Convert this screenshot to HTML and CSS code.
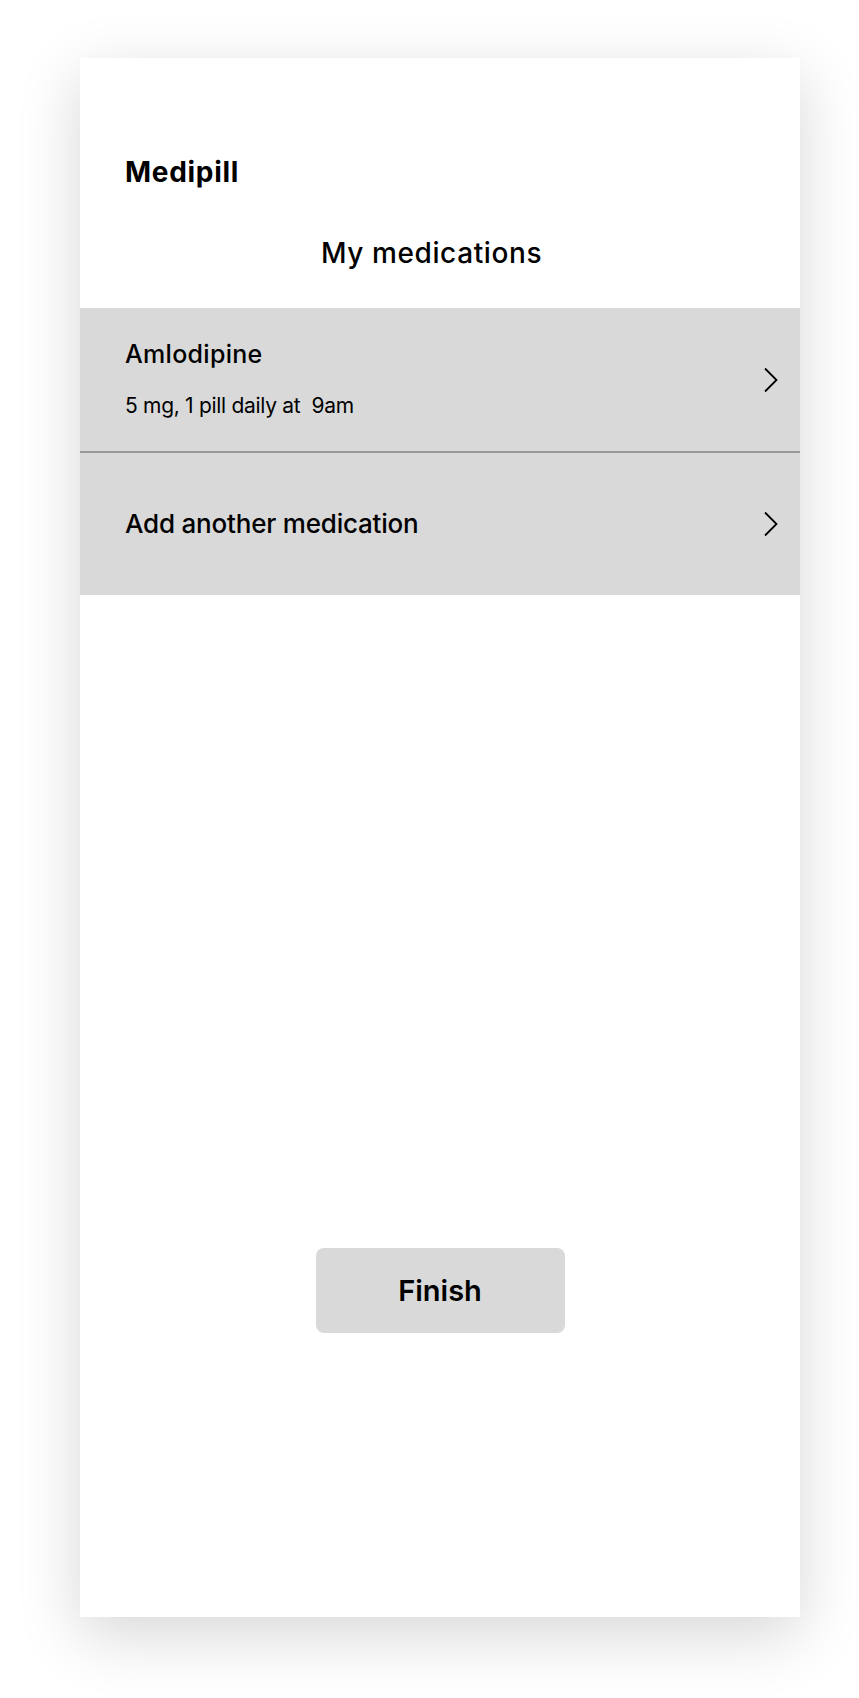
FILE: index.html
```html
<!DOCTYPE html>
<html>
<head>
	<meta charset="utf-8">
	<title>Medipill</title>
	<link rel="stylesheet" href="styles.css">
</head>
<body>
	<div class="page">
		<div class="phone">
			<div class="brand">Medipill</div>
			<h1 class="title">My medications</h1>

			<ul class="med-list">
				<li class="med-item first">
					<div class="med-text">
						<div class="med-name">Amlodipine</div>
						<div class="med-dose">5 mg, 1 pill daily at&nbsp; 9am</div>
					</div>
					<svg class="chevron" width="16" height="26" viewBox="0 0 16 26">
						<path d="M2 1.5 L13.5 13 L2 24.5" fill="none" stroke="#000" stroke-width="1.8"/>
					</svg>
				</li>
				<li class="med-item add">
					<div class="med-add">Add another medication</div>
					<svg class="chevron" width="16" height="26" viewBox="0 0 16 26">
						<path d="M2 1.5 L13.5 13 L2 24.5" fill="none" stroke="#000" stroke-width="1.8"/>
					</svg>
				</li>
			</ul>

			<div class="footer">
				<button class="finish">Finish</button>
			</div>
		</div>
	</div>
</body>
</html>
```

FILE: styles.css
```css
* {
	padding: 0;
	margin: 0;
	box-sizing: border-box;
}
li {
	list-style: none;
}
body {
	background: #fff;
	font-family: Inter, "Liberation Sans", sans-serif;
	color: #000;
}
.page {
	padding: 58px 59px 81px 80px;
}
.phone {
	width: 720px;
	height: 1559px;
	background: #fff;
	box-shadow: 0 18px 60px rgba(0, 0, 0, 0.16);
	display: flex;
	flex-direction: column;
}
.brand {
	padding: 96px 0 0 45px;
	font-size: 28px;
	font-weight: 700;
	line-height: 36px;
	letter-spacing: 0.7px;
}
.title {
	margin-top: 46px;
	padding-right: 17px;
	text-align: center;
	font-size: 28px;
	font-weight: 500;
	line-height: 34px;
	letter-spacing: 0.6px;
}
.med-list {
	margin-top: 38px;
	background: #d9d9d9;
}
.med-item {
	display: flex;
	align-items: center;
	justify-content: space-between;
	padding: 0 21px 0 45px;
}
.med-item.first {
	height: 145px;
	border-bottom: 2px solid #9a9a9a;
}
.med-item.add {
	height: 142px;
}
.med-name {
	font-size: 25px;
	font-weight: 500;
	line-height: 30px;
	letter-spacing: 0.3px;
}
.med-dose {
	margin-top: 23px;
	font-size: 21px;
	font-weight: 400;
	line-height: 28px;
	letter-spacing: -0.3px;
}
.med-add {
	font-size: 26px;
	font-weight: 500;
	line-height: 32px;
	letter-spacing: -0.2px;
}
.chevron {
	display: block;
}
.footer {
	margin-top: 653px;
	display: flex;
	justify-content: center;
}
.finish {
	width: 249px;
	height: 85px;
	border: none;
	border-radius: 8px;
	background: #d9d9d9;
	font-family: Inter, "Liberation Sans", sans-serif;
	font-size: 29px;
	font-weight: 600;
	color: #000;
}
```
